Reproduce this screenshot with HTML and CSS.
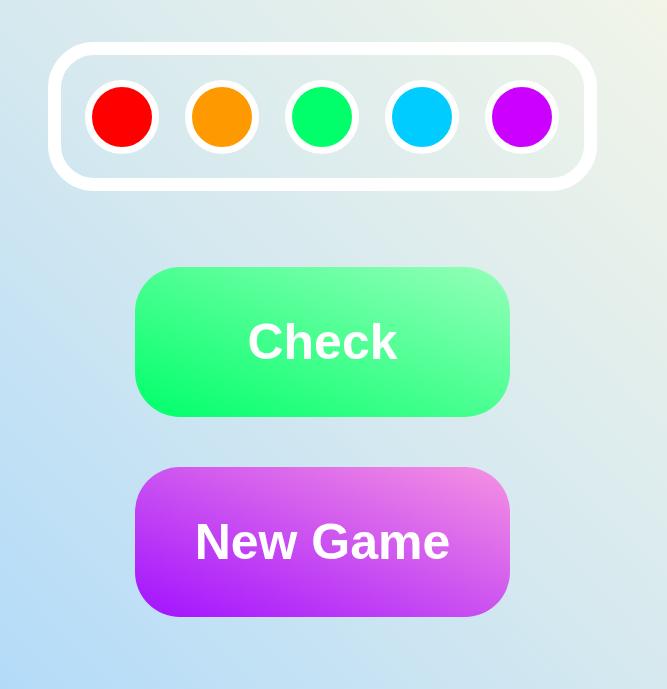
FILE: index.html
```html
<!DOCTYPE html>
<html lang="en">
<head>
<meta charset="utf-8">
<title>Colour Game</title>
<link rel="stylesheet" href="styles.css">
</head>
<body>
<main class="game">
  <div class="palette">
    <span class="peg peg-red"></span>
    <span class="peg peg-orange"></span>
    <span class="peg peg-green"></span>
    <span class="peg peg-cyan"></span>
    <span class="peg peg-purple"></span>
  </div>
  <div class="actions">
    <button class="btn btn-check">Check</button>
    <button class="btn btn-new">New Game</button>
  </div>
</main>
</body>
</html>
```
FILE: styles.css
```css
html, body {
  margin: 0;
  height: 100%;
}
body {
  background: linear-gradient(to top right, #b3dbf9 0%, #d6e9ef 50%, #f2f5e8 100%);
  font-family: "Liberation Sans", Arial, sans-serif;
  overflow: hidden;
}
.game {
  width: 645px;
  display: flex;
  flex-direction: column;
  align-items: center;
  padding-top: 42px;
}
.palette {
  display: flex;
  gap: 26px;
  padding: 25px 25px 24px 24px;
  border: 13px solid #fff;
  border-radius: 46px;
}
.peg {
  width: 74px;
  height: 74px;
  box-sizing: border-box;
  border: 7.5px solid #fff;
  border-radius: 50%;
}
.peg-red { background: #ff0000; }
.peg-orange { background: #ff9900; }
.peg-green { background: #00ff6a; }
.peg-cyan { background: #00ccff; }
.peg-purple { background: #cc00ff; }
.actions {
  display: flex;
  flex-direction: column;
  gap: 50px;
  margin-top: 76px;
}
.btn {
  width: 375px;
  height: 150px;
  border: none;
  border-radius: 45px;
  color: #fff;
  font-family: "Liberation Sans", Arial, sans-serif;
  font-weight: bold;
  font-size: 50px;
  padding: 0;
  cursor: pointer;
}
.btn-check {
  background: linear-gradient(to top right, #00ff6a 0%, #94ffb9 100%);
}
.btn-new {
  background: linear-gradient(to top right, #a112ff 0%, #f692e2 100%);
}
```
